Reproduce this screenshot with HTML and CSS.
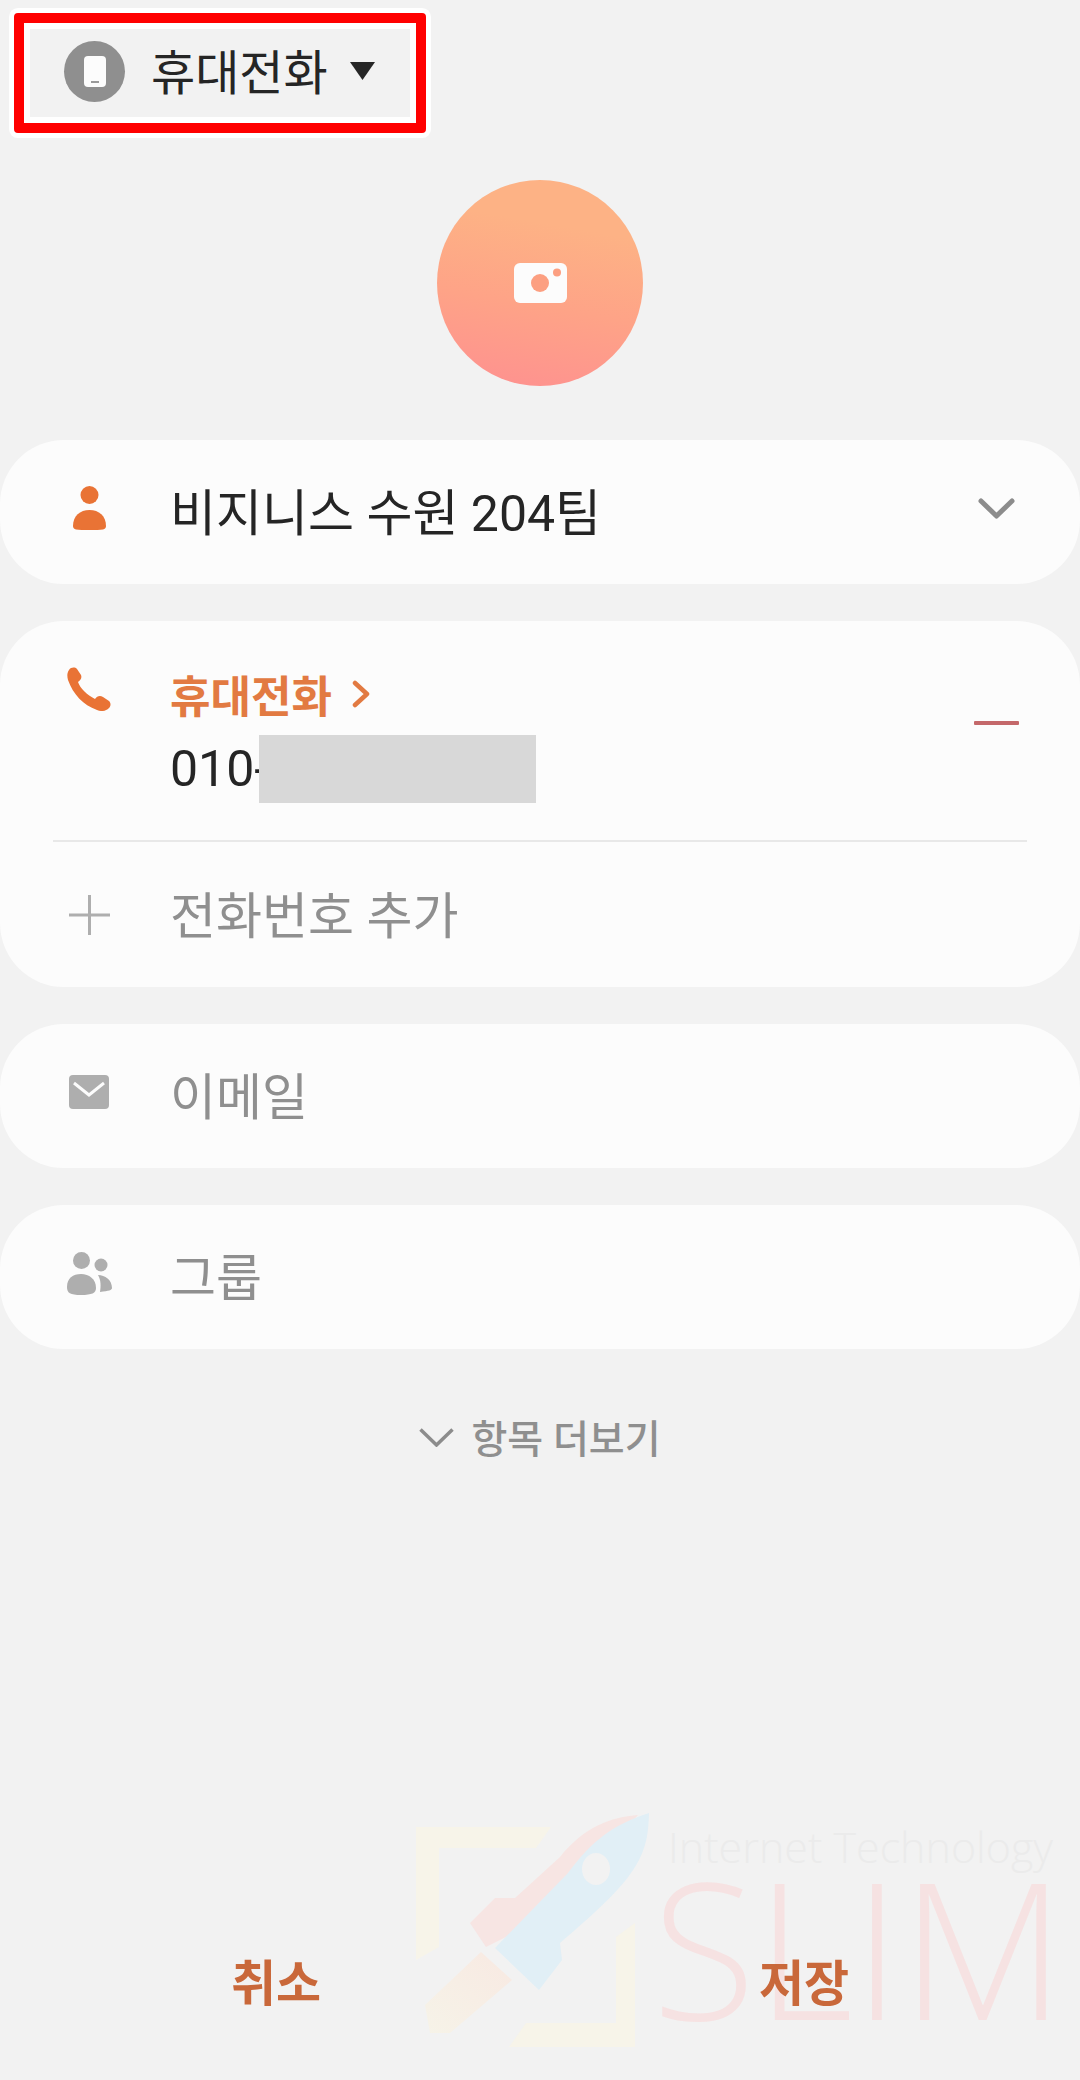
FILE: index.html
```html
<!DOCTYPE html>
<html lang="ko">
<head>
    <meta charset="UTF-8">
    <meta name="viewport" content="width=device-width, initial-scale=1.0">
    <title>연락처 추가</title>
    <link rel="stylesheet" href="styles.css">
</head>
<body>
    <div class="page">
        <div class="storage">
            <span class="storage-icon">
                <svg width="22" height="31" viewBox="0 0 22 31"><rect width="22" height="31" rx="4" fill="#fcfcfc"/><rect x="7" y="25" width="8" height="2" fill="#9a9a9a"/></svg>
            </span>
            <span class="storage-name">휴대전화</span>
            <svg class="storage-arrow" width="25" height="18" viewBox="0 0 25 18"><path d="M0 0H25L12.500 18Z" fill="#262626"/></svg>
        </div>

        <div class="avatar">
            <svg width="53" height="40" viewBox="0 0 53 40"><rect width="53" height="40" rx="6" fill="#fcfcfc"/><circle cx="26" cy="20" r="9" fill="#fc9f81"/><circle cx="43" cy="9.500" r="4" fill="#fc9f81"/></svg>
        </div>

        <div class="card">
            <div class="row">
                <span class="row-icon">
                    <svg width="33" height="44" viewBox="0 0 33 44"><circle cx="16.500" cy="9" r="9" fill="#e97335"/><path d="M0 40C0 30 7 24 16.500 24S33 30 33 40C33 42 32 43 30 43.500 22 44.500 11 44.500 3 43.500 1 43 0 42 0 40Z" fill="#e97335"/></svg>
                </span>
                <span class="row-text">비지니스 수원 204팀</span>
                <svg class="row-end" width="37" height="21" viewBox="0 0 37 21"><path d="M3 3L18.500 18 34 3" fill="none" stroke="#8c8c8c" stroke-width="5" stroke-linecap="round" stroke-linejoin="round"/></svg>
            </div>
        </div>

        <div class="card">
            <div class="row row-phone">
                <span class="row-icon">
                    <svg width="44" height="44" viewBox="0 0 44 44"><path d="M2 3C4 0 8 0 10 2L14 8C15 11 14 13 11 15 13 21 20 28 28 32 30 29 33 28 36 30L42 34C44 36 44 39 42 41 39 44 35 45 30 43 16 38 6 27 1 13 0 9 0 6 2 3Z" fill="#e97335"/></svg>
                </span>
                <div class="phone-info">
                    <div class="phone-label">휴대전화
                        <svg width="18" height="28" viewBox="0 0 18 28"><path d="M3 3L15 14 3 25" fill="none" stroke="#e27a42" stroke-width="4.500" stroke-linecap="round" stroke-linejoin="round"/></svg>
                    </div>
                    <div class="phone-number"><span class="phone-digits">010-</span><span class="redacted"></span></div>
                </div>
                <span class="minus"></span>
            </div>
            <div class="divider"></div>
            <div class="row row-add">
                <span class="row-icon">
                    <svg width="41" height="40" viewBox="0 0 41 40"><path d="M20.500 0V40M0 20H41" stroke="#aeaeae" stroke-width="3"/></svg>
                </span>
                <span class="row-text muted">전화번호 추가</span>
            </div>
        </div>

        <div class="card">
            <div class="row">
                <span class="row-icon">
                    <svg width="40" height="34" viewBox="0 0 40 34"><rect width="40" height="34" rx="4" fill="#aeaeae"/><path d="M5 8L20 20 35 8" fill="none" stroke="#fcfcfc" stroke-width="3"/></svg>
                </span>
                <span class="row-text muted">이메일</span>
            </div>
        </div>

        <div class="card">
            <div class="row">
                <span class="row-icon">
                    <svg width="45" height="43" viewBox="0 0 45 43"><ellipse cx="14.500" cy="8.500" rx="8.500" ry="8.500" fill="#aeaeae"/><circle cx="34" cy="13" r="6.500" fill="#aeaeae"/><path d="M0 35C0 26 6 22 14 22S29 27 29 36C29 41 25 43 14 43S0 41 0 35Z" fill="#aeaeae"/><path d="M31 23C38 23 45 28 45 36 45 38 42 39 33 40 34 34 34 28 31 23Z" fill="#aeaeae"/></svg>
                </span>
                <span class="row-text muted">그룹</span>
            </div>
        </div>

        <div class="more">
            <svg class="more-arrow" width="35" height="19" viewBox="0 0 35 19"><path d="M1.500 1.500L17.500 17 33.500 1.500" fill="none" stroke="#8c8c8c" stroke-width="3.500"/></svg>
            <span>항목 더보기</span>
        </div>

        <div class="footer">
            <span class="footer-btn">취소</span>
            <span class="footer-btn">저장</span>
        </div>

        <!-- watermark over the bottom of the screen -->
        <div class="watermark">
            <svg class="wm-logo" width="240" height="240" viewBox="0 0 240 240">
                <defs>
                    <linearGradient id="flame" x1="1" y1="0" x2="0" y2="1">
                        <stop offset="0" stop-color="#f8e9e2"/>
                        <stop offset="1" stop-color="#f6f3e8"/>
                    </linearGradient>
                </defs>
                <path d="M0 0H135L120 21H23V120L0 133Z" fill="#f7f4e9"/>
                <path d="M219 96V220H93L110 196H200V110Z" fill="#f7f4e9"/>
                <path d="M65 125L96 153 34 206H14L9 178Z" fill="url(#flame)"/>
                <path d="M222 -12C195 -10 168 0 144 30L99 71H79L54 96 70 120 130 90Z" fill="#f7e5e3"/>
                <path d="M233 -14C196 -2 176 14 152 46L115 84 79 121 123 163 146 133 144 116C222 50 232 30 233 -14Z" fill="#e1eff6"/>
                <ellipse cx="180" cy="42" rx="14" ry="16" fill="#f2f2f2"/>
            </svg>
            <div class="wm-sub">Internet Technology</div>
            <div class="wm-title">SLIM</div>
        </div>
    </div>
</body>
</html>
```

FILE: styles.css
```css
* {
    box-sizing: border-box;
}
body {
    margin: 0;
    background-color: #f2f2f2;
    font-family: Roboto, "Noto Sans CJK KR", sans-serif;
    color: #252525;
}
.page {
    position: relative;
    display: flex;
    flex-direction: column;
    height: 2080px;
    overflow: hidden;
}
.storage {
    display: flex;
    align-items: center;
    width: 412px;
    height: 120px;
    margin: 13px 0 0 14px;
    padding-left: 40px;
    border: 10px solid #ff0000;
    border-radius: 4px;
    box-shadow: 0 0 0 5px #fff, inset 0 0 0 6px #fff;
}
.storage-icon {
    display: flex;
    align-items: center;
    justify-content: center;
    width: 61px;
    height: 61px;
    margin-top: -3px;
    border-radius: 50%;
    background-color: #8f8f8f;
}
.storage-name {
    margin: 2px 0 0 26px;
    font-size: 48px;
    line-height: 60px;
}
.storage-arrow {
    margin: -5px 0 0 22px;
}
.avatar {
    display: flex;
    align-items: center;
    justify-content: center;
    align-self: center;
    width: 206px;
    height: 206px;
    margin-top: 47px;
    border-radius: 50%;
    background: linear-gradient(190deg, #fdb285 25%, #fea387 60%, #fe9090 100%);
}
.card {
    margin-bottom: 37px;
    border-radius: 64px;
    background-color: #fcfcfc;
}
.avatar + .card {
    margin-top: 54px;
}
.row {
    display: flex;
    align-items: center;
    height: 144px;
    padding-right: 65px;
}
.row-icon {
    display: flex;
    justify-content: center;
    flex-shrink: 0;
    width: 178px;
    margin-right: -8px;
    margin-top: -8px;
}
.row-text {
    padding-top: 4px;
    font-size: 50px;
    line-height: 60px;
}
.muted {
    color: #8f8f8f;
}
.row-end {
    margin: -8px 0 0 auto;
}
.row-phone {
    align-items: flex-start;
    height: 219px;
    padding-top: 46px;
}
.row-phone .row-icon {
    margin-top: 0;
}
.phone-label {
    display: flex;
    align-items: center;
    gap: 20px;
    height: 56px;
    margin-top: -1px;
    font-size: 44px;
    font-weight: 700;
    color: #e27a42;
}
.phone-number {
    display: flex;
    align-items: center;
    height: 68px;
    margin-top: 13px;
    font-size: 50px;
}
.phone-digits {
    width: 89px;
    white-space: nowrap;
}
.redacted {
    width: 277px;
    height: 68px;
    background-color: #d8d8d8;
}
.minus {
    width: 45px;
    height: 4px;
    margin: 54px -4px 0 auto;
    border-radius: 1px;
    background-color: #c4686a;
}
.divider {
    height: 2px;
    margin: 0 53px;
    background-color: #e8e8e8;
}
.row-add {
    height: 145px;
}
.row-add .row-icon {
    margin-top: 0;
}
.more {
    display: flex;
    align-items: center;
    justify-content: center;
    gap: 17px;
    margin-top: 29px;
    font-size: 39px;
    line-height: 50px;
    font-weight: 500;
    color: #8f8f8f;
}
.more-arrow {
    margin-top: -5px;
}
.footer {
    display: grid;
    grid-template-columns: 1fr 1fr;
    margin-top: auto;
    padding: 0 12px 62px;
    position: relative;
    z-index: 1;
}
.footer-btn {
    text-align: center;
    font-size: 49px;
    line-height: 66px;
    font-weight: 700;
    color: #c9683a;
}
.watermark {
    position: absolute;
    left: 416px;
    top: 1827px;
    width: 640px;
    height: 224px;
}
.wm-logo {
    position: absolute;
    left: 0;
    top: 0;
    overflow: visible;
}
.wm-sub {
    position: absolute;
    left: 252px;
    top: -6px;
    font-family: "Open Sans", sans-serif;
    font-size: 43px;
    line-height: 52px;
    font-weight: 300;
    white-space: nowrap;
    color: #ebebeb;
}
.wm-title {
    position: absolute;
    left: 236px;
    top: 20px;
    font-family: "Open Sans", sans-serif;
    font-size: 190px;
    line-height: 200px;
    font-weight: 300;
    color: #f6e2e2;
}
```
